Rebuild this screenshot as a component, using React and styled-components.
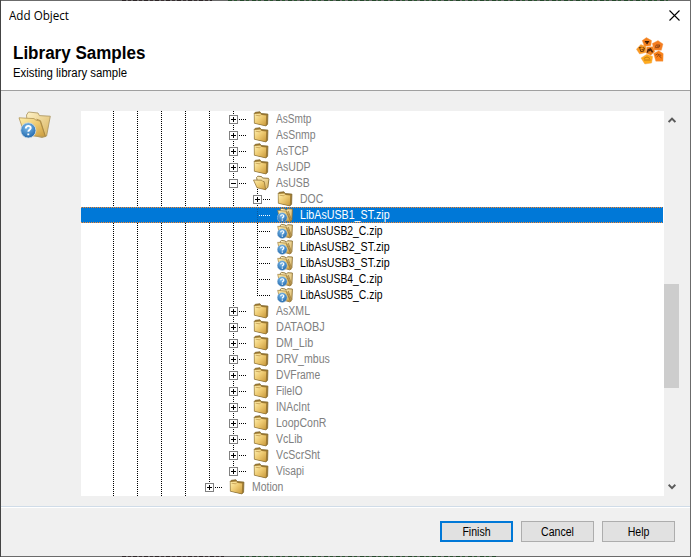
import React from "react";
import styled, { createGlobalStyle } from "styled-components";

const GlobalStyle = createGlobalStyle`
  * { box-sizing: border-box; }
  body { margin: 0; overflow: hidden; font-family: "Liberation Sans", Arial, sans-serif; font-size: 12px; color: #000; }
`;

const Dialog = styled.div`
  width: 691px;
  height: 557px;
  display: flex;
  flex-direction: column;
  border: 0 solid #6b6b6b;
  border-width: 0 1px;
  border-left-color: #444;
  background: #f0f0f0;
`;

const Edge = styled.div`
  height: 1px;
  flex: none;
  background:
    repeating-linear-gradient(90deg, #2d2527 0 4px, #6b6b6b 4px 6px, #3a3032 6px 9px, #6b6b6b 9px 11px) ${(p) => p.$from}px 0 / ${(p) => p.$dark}px 1px no-repeat,
    repeating-linear-gradient(90deg, #24482a 0 4px, #6b6b6b 4px 6px, #2c5531 6px 9px, #6b6b6b 9px 12px) ${(p) => p.$from + p.$dark + 16}px 0 / ${(p) => p.$green}px 1px no-repeat,
    #6b6b6b;
`;

const Text = styled.span`
  display: block;
  white-space: pre;
  transform: scaleX(${(p) => p.$fit || 1});
  transform-origin: ${(p) => (p.$center ? "center" : "left")};
`;

const Header = styled.header`
  height: 90px;
  flex: none;
  background: #fff;
  border-bottom: 1px solid #a0a0a0;
`;

const TitleBar = styled.div`
  height: 29px;
  display: flex;
  justify-content: space-between;
  align-items: center;
  padding: 0 10px 0 8px;
  font-family: "Open Sans", "Noto Sans", sans-serif;
`;

const Banner = styled.div`
  display: flex;
  justify-content: space-between;
  padding: 7px 26px 0 12px;
`;

const Title = styled.h1`
  margin: 6px 0 0;
  font-size: 18px;
  line-height: 20px;
  font-weight: 700;
`;

const Subtitle = styled.div`
  margin-top: 3px;
  line-height: 14px;
`;

const Body = styled.main`
  height: 415px;
  flex: none;
  display: flex;
  padding: 20px 11px 10px 17px;
`;

const Side = styled.div`
  width: 63px;
  flex: none;
`;

const Tree = styled.div`
  width: 583px;
  height: 385px;
  flex: none;
  background: #fff;
  overflow: hidden;
`;

const Row = styled.div`
  position: relative;
  width: 582px;
  height: ${(p) => (p.$last ? 17 : 16)}px;
  display: flex;
  padding-left: 20px;
  line-height: 16px;
  color: ${(p) => (p.$selected ? "#fff" : p.$leaf ? "#000" : "#808080")};
  background: ${(p) => (p.$selected ? "#0078d7" : "transparent")};
  &::after {
    content: "";
    display: ${(p) => (p.$selected ? "block" : "none")};
    position: absolute;
    inset: 0;
    background:
      repeating-linear-gradient(90deg, #ff8728 0 1px, #0078d7 1px 2px) top / 100% 1px no-repeat,
      repeating-linear-gradient(90deg, #ff8728 0 1px, #0078d7 1px 2px) bottom / 100% 1px no-repeat;
  }
`;

const Guide = styled.div`
  width: 24px;
  flex: none;
  background: repeating-linear-gradient(${(p) => (p.$hidden ? "transparent" : "#000")} 0 1px, transparent 1px 2px) 12px 0 / 1px 100% no-repeat;
`;

const Branch = styled.div`
  width: 32px;
  height: 16px;
  flex: none;
  padding: 4px 0 0 8px;
  background:
    repeating-linear-gradient(${(p) => (p.$light ? "#0b5a9e" : "#000")} 0 1px, transparent 1px 2px) 12px 0 / 1px ${(p) => (p.$end ? 9 : 16)}px no-repeat,
    repeating-linear-gradient(90deg, ${(p) => (p.$light ? "#fff" : "#000")} 0 1px, transparent 1px 2px) 12px 8px / ${(p) => (p.$leaf ? 13 : 14)}px 1px no-repeat;
`;

const Toggle = styled.div`
  width: 9px;
  height: 9px;
  border: 1px solid #808080;
  background:
    linear-gradient(#000, #000) center / 5px 1px no-repeat,
    linear-gradient(#000, #000) center / 1px ${(p) => (p.$open ? 1 : 5)}px no-repeat,
    #fff;
`;

const IconSlot = styled.div`
  width: 23px;
  height: 16px;
  flex: none;
  background: ${(p) => (p.$stub ? "repeating-linear-gradient(#000 0 1px, transparent 1px 2px) 4px 12px / 1px 4px no-repeat" : "none")};
`;

const Svg = styled.svg`
  display: block;
`;

const Scrollbar = styled.div`
  width: 15px;
  height: 385px;
  display: flex;
  flex-direction: column;
  align-items: center;
  padding: 6px 0;
`;

const Thumb = styled.div`
  width: 15px;
  height: 104px;
  margin-top: 161px;
  margin-bottom: auto;
  background: #cdcdcd;
`;

const Footer = styled.footer`
  flex: 1;
  display: flex;
  justify-content: flex-end;
  gap: 8px;
  padding: 14px 15px 0;
  border-top: 1px solid #d0dce8;
  box-shadow: inset 0 1px #fff;
`;

const Button = styled.button`
  width: 73px;
  height: 21px;
  padding: 0;
  font: 12px/16px "Liberation Sans", Arial, sans-serif;
  color: #000;
  background: #e1e1e1;
  border: ${(p) => (p.$primary ? "2px solid #0078d7" : "1px solid #adadad")};
`;

const Defs = () => (
  <Svg width="0" height="0">
    <defs>
      <linearGradient id="gold" x1="0" y1="0" x2="1" y2="1">
        <stop offset="0" stopColor="#fff0ae" />
        <stop offset=".5" stopColor="#edc970" />
        <stop offset="1" stopColor="#c99a3c" />
      </linearGradient>
      <linearGradient id="pale" x1="0" y1="0" x2="1" y2="1">
        <stop offset="0" stopColor="#fff3c8" />
        <stop offset="1" stopColor="#d8b25c" />
      </linearGradient>
      <radialGradient id="blue" cx=".45" cy=".3" r=".75">
        <stop offset="0" stopColor="#7cbcec" />
        <stop offset="1" stopColor="#1c62a8" />
      </radialGradient>
    </defs>
  </Svg>
);

const Folder = () => (
  <Svg width="17" height="16" viewBox="0 0 17 16">
    <path d="M1.3 2.3 L2.3 1.3 L7 .8 L8 2.5 L14.9 3.1 L14.6 13.2 L13 14.9 L1.4 12.2Z" fill="#a07a30" stroke="#80682f" strokeWidth=".8" />
    <path d="M1.5 3 L7.5 2.5 L8.4 4 L13.2 4.5 L12.8 14.4 L1.7 12Z" fill="url(#gold)" />
    <path d="M2.5 4.2 L6.8 4.8 L8.2 3.4" fill="none" stroke="#c39c50" strokeWidth=".8" />
  </Svg>
);

const OpenFolder = () => (
  <Svg width="17" height="16" viewBox="0 0 17 16">
    <path d="M3.6 2.4 L4.8 1.2 L8.6 1.6 L9.6 3 L15.4 3.3 L15.9 4.2 L14.9 12.2 L12.6 14.6 L5 11Z" fill="url(#pale)" stroke="#8b7136" strokeWidth=".9" />
    <path d="M.5 5 L8.6 5.2 L9.8 6.4 L11.2 6.6 L12.7 14.7 L4 12.8Z" fill="url(#gold)" stroke="#94753a" strokeWidth=".8" />
  </Svg>
);

const BigSample = () => (
  <Svg width="34" height="30" viewBox="0 0 34 30">
    <path d="M8.5 4 L10.5 1 L20 2 L21.4 4.6 L32.3 5.2 L28.6 25 L24 26.6 L10 23Z" fill="url(#pale)" stroke="#a8925c" strokeWidth=".8" />
    <path d="M1 6.8 L16 7.6 L18 9.2 L22 10 L27.4 25.6 L7 24.5Z" fill="url(#gold)" stroke="#b09353" strokeWidth=".8" />
    <path d="M18.5 8.2 L22.5 9.7 L27.3 25.2" fill="none" stroke="#a48139" strokeWidth=".8" />
    <circle cx="10.3" cy="19.4" r="7.6" fill="url(#blue)" stroke="#d3dfe9" strokeWidth=".8" />
    <path d="M7.8 17.4 C7.8 14 13 14.2 12.7 17.2 C12.5 18.7 10.3 18.8 10.3 20.8 M10.3 22.4 V24.2" fill="none" stroke="#fff" strokeWidth="1.9" />
  </Svg>
);

const SmallSample = () => (
  <Svg width="17" height="16" viewBox="0 0 17 16">
    <path d="M3 2.7 L4.6 1.4 L8.3 2 L9.2 3.3 L10.6 1.7 L15.4 2 L14.9 13 L12.6 14.8 L5 12Z" fill="url(#pale)" stroke="#8c7136" strokeWidth=".9" />
    <path d="M.7 3.3 L9 4.2 L10.7 5.4 L14 14.4 L3 13.3Z" fill="url(#gold)" stroke="#9d7d3f" strokeWidth=".7" />
    <path d="M9.3 4.8 L13.5 14.2 M11.2 4 L14.2 12" stroke="#8f6f31" strokeWidth=".7" />
    <circle cx="5.2" cy="10.6" r="4.9" fill="url(#blue)" stroke="#b7cfe2" strokeWidth=".5" />
    <path d="M3.6 9.3 C3.8 7.1 7 7.4 6.8 9.2 C6.6 10.3 5.3 10.3 5.3 11.6 M5.3 12.5 V13.7" fill="none" stroke="#fff" strokeWidth="1.2" />
  </Svg>
);

const Logo = () => (
  <Svg width="28" height="28" viewBox="0 0 28 28">
    <g stroke="#f0a050" strokeWidth=".4">
      <path d="M10.4 .6 L15.6 3.6 L14.8 8.8 L8.3 9.3 L6.2 3.6Z" fill="#f5801c" />
      <path d="M.4 12.2 L4.8 7.6 L10 9.6 L9.8 15.5 L3.6 17Z" fill="#fb9a20" />
      <path d="M16.3 6.5 L22 3.6 L27 7 L25.4 13.2 L18 13Z" fill="#f47c20" />
      <path d="M17.6 16.4 L22.8 13.8 L27.2 16.6 L27 24.2 L19.8 24.2Z" fill="#fb8118" />
      <path d="M10.8 17.2 L16.7 19.4 L15.6 26 L8.8 27 L5 21Z" fill="#ffac1c" />
      <path d="M10.8 10.1 L17 9.8 L18.8 14.7 L14.8 18.2 L10 16Z" fill="#ec7f1d" />
    </g>
    <g fill="none" stroke="#8a4212" strokeWidth=".9">
      <path d="M8.8 4.7 H13.2 M11.4 4.7 L10.9 7.2" stroke="#3c1b06" strokeWidth="1.5" />
      <path d="M2.8 10.6 L5.6 10.2 M3.8 11 L4.8 14.6 L7.6 14.2 L8.4 11 L6.6 10.6 M5.4 12.7 H7.6" stroke="#5d300b" />
      <path d="M19.4 10.6 L20.2 8 H23.8 L22.8 10.6 H19.5 M21 9.2 H24" />
      <path d="M19.4 18.2 L21.4 17 L25.2 18.4 M20.6 20 L22.4 18.4 L25.4 20.8" />
      <path d="M7.8 21.5 L11 19.9 L14 21.5 M8 23 H14.6" stroke="#b87416" />
      <path d="M11.4 15.6 L12.2 12.8 L14.5 12 L16.6 15.4 M13.6 12.4 V14.2" stroke="#4c2208" strokeWidth="1.5" />
    </g>
  </Svg>
);

const CloseIcon = () => (
  <Svg width="11" height="11" viewBox="0 0 11 11">
    <path d="M.5 .5 L10.5 10.5 M10.5 .5 L.5 10.5" stroke="#000" strokeWidth="1.1" />
  </Svg>
);

const Chevron = ({ down }) => (
  <Svg width="8" height="6" viewBox="0 0 8 6">
    <path d={down ? "M.6 .8 L4 4.2 L7.4 .8" : "M.6 5 L4 1.6 L7.4 5"} fill="none" stroke="#5a5a5a" strokeWidth="2" />
  </Svg>
);

const folder = (name, fit) => ({ name, fit, depth: 5, kind: "folder" });
const sample = (name, fit = 0.88) => ({ name, fit, depth: 6, kind: "sample" });

const rows = [
  folder("AsSmtp", 0.84),
  folder("AsSnmp", 0.87),
  folder("AsTCP", 0.86),
  folder("AsUDP", 0.88),
  { ...folder("AsUSB", 0.87), kind: "open" },
  { ...folder("DOC", 0.87), depth: 6 },
  { ...sample("LibAsUSB1_ST.zip", 0.89), selected: true },
  sample("LibAsUSB2_C.zip", 0.865),
  sample("LibAsUSB2_ST.zip", 0.89),
  sample("LibAsUSB3_ST.zip", 0.89),
  sample("LibAsUSB4_C.zip", 0.865),
  { ...sample("LibAsUSB5_C.zip", 0.865), end: true },
  folder("AsXML", 0.88),
  folder("DATAOBJ", 0.91),
  folder("DM_Lib", 0.9),
  folder("DRV_mbus", 0.88),
  folder("DVFrame", 0.86),
  folder("FileIO", 0.83),
  folder("INAcInt", 0.86),
  folder("LoopConR", 0.88),
  folder("VcLib", 0.88),
  folder("VcScrSht", 0.88),
  { ...folder("Visapi", 0.86), end: true },
  { ...folder("Motion", 0.87), depth: 4, end: true, last: true },
];

const icons = { folder: Folder, open: OpenFolder, sample: SmallSample };

function TreeRow({ item }) {
  const Icon = icons[item.kind];
  const leaf = item.kind === "sample";
  return (
    <Row $leaf={leaf} $selected={item.selected} $last={item.last}>
      {Array.from({ length: item.depth }, (_, i) => <Guide key={i} $hidden={item.selected} />)}
      <Branch $leaf={leaf} $end={item.end} $light={item.selected}>
        {!leaf && <Toggle $open={item.kind === "open"} />}
      </Branch>
      <IconSlot $stub={item.kind === "open"}><Icon /></IconSlot>
      <Text $fit={item.fit}>{item.name}</Text>
    </Row>
  );
}

export default function App() {
  return (
    <>
      <GlobalStyle />
      <Dialog>
        <Edge $from={121} $dark={90} $green={440} />
        <Header>
          <TitleBar><Text $fit={0.97}>Add Object</Text><CloseIcon /></TitleBar>
          <Banner>
            <div>
              <Title><Text $fit={0.945}>Library Samples</Text></Title>
              <Subtitle><Text $fit={0.95}>Existing library sample</Text></Subtitle>
            </div>
            <Logo />
          </Banner>
        </Header>
        <Body>
          <Side><BigSample /></Side>
          <Tree>{rows.map((item) => <TreeRow key={item.name} item={item} />)}</Tree>
          <Scrollbar><Chevron /><Thumb /><Chevron down /></Scrollbar>
        </Body>
        <Footer>
          <Button $primary><Text $center $fit={0.88}>Finish</Text></Button>
          <Button><Text $center $fit={0.88}>Cancel</Text></Button>
          <Button><Text $center $fit={0.88}>Help</Text></Button>
        </Footer>
        <Edge $from={121} $dark={102} $green={258} />
        <Defs />
      </Dialog>
    </>
  );
}
